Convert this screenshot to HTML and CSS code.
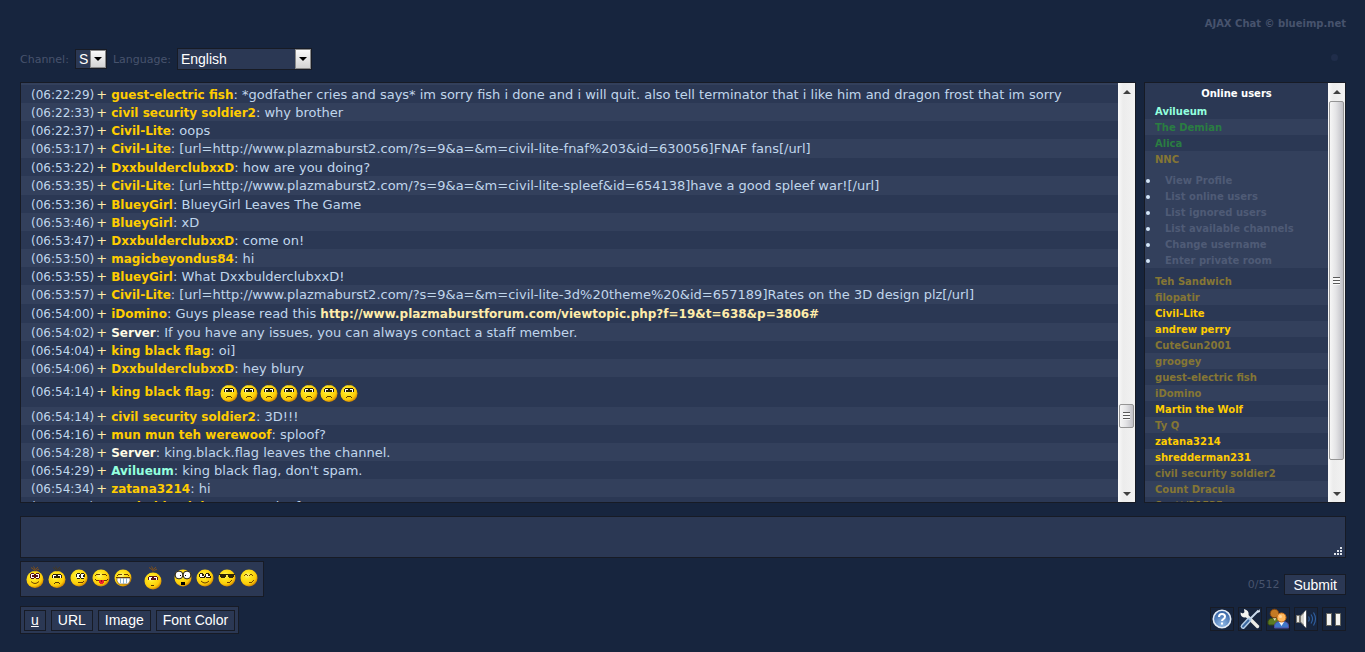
FILE: index.html
```html
<!DOCTYPE html>
<html lang="en">
  <head>
    <meta charset="UTF-8" />
    <title>AJAX Chat</title>
    <link rel="stylesheet" href="styles.css">
  </head>
  <body>
    <!-- shared emoticon shapes -->
    <svg class="defs" aria-hidden="true">
      <defs>
        <radialGradient id="ballFill" cx="0.4" cy="0.35" r="0.68">
          <stop offset="0" stop-color="#fff48a" />
          <stop offset="0.3" stop-color="#ffe61e" />
          <stop offset="0.75" stop-color="#fccb08" />
          <stop offset="1" stop-color="#c97a00" />
        </radialGradient>
        <radialGradient id="helpFill" cx="0.5" cy="0.8" r="0.8">
          <stop offset="0" stop-color="#8fb8e6" />
          <stop offset="1" stop-color="#2c5a9c" />
        </radialGradient>
        <symbol id="ball" viewBox="0 0 18 18">
          <circle cx="9" cy="9" r="8.500" fill="url(#ballFill)" />
        </symbol>
        <symbol id="hair" viewBox="0 0 18 6">
          <path d="M9 5.5V3M8.500 4L5 1.500M9.500 3.500L12 1M9 3L7.500 0.500M10 4.500L13 3" fill="none" stroke-width="0.9" />
        </symbol>
        <symbol id="smile" viewBox="0 0 18 26">
          <use href="#ball" y="5.500" width="18" height="18" />
          <use href="#hair" y="1" width="18" height="6" stroke="#8a5212" />
          <path d="M5 9h3v5h-3zM10 9h3v5h-3z" fill="#fff" />
          <path d="M5 8h3v1h-3zM10 8h3v1h-3zM4 9h1v4h-1zM8 9h2v4h-2zM13 9h1v4h-1zM5 13h3v1h-3zM10 13h3v1h-3zM6 10h2v2h-2zM10 10h2v2h-2z" fill="#5a1418" />
          <path d="M5 16.500q4 4 8 0" fill="none" stroke="#6b3d00" />
        </symbol>
        <symbol id="sad" viewBox="0 0 18 26">
          <use href="#ball" y="5.500" width="18" height="18" />
          <use href="#hair" y="1" width="18" height="6" stroke="#4a3a1c" />
          <path d="M5 10h3v3h-3zM10 10h3v3h-3z" fill="#fff" />
          <path d="M5 9h8v1h-8zM4 10h1v3h-1zM8 10h2v3h-2zM13 10h1v3h-1zM6 11h2v2h-2zM10 11h2v2h-2z" fill="#2a2008" />
          <path d="M7 17h4v1h-4zM6 18h1v1h-1zM11 18h1v1h-1z" fill="#5a3a00" />
        </symbol>
        <symbol id="look" viewBox="0 0 18 26">
          <use href="#ball" y="4" width="18" height="18" />
          <path d="M7 9h3v4h-3zM11 9h3v4h-3z" fill="#fff" />
          <path d="M7 8h3v1h-3zM11 8h3v1h-3zM6 9h1v3h-1zM10 9h1v4h-1zM14 9h1v3h-1zM9 10h1v2h-1zM13 10h1v2h-1zM7 13h3v1h-3zM11 13h3v1h-3z" fill="#2a2008" />
          <path d="M8 17h5v1h-5zM13 16h1v1h-1z" fill="#6b3d00" />
        </symbol>
        <symbol id="tongue" viewBox="0 0 18 26">
          <use href="#ball" y="4" width="18" height="18" />
          <path d="M4 9h4v1h-4zM3 10h1v1h-1zM10 9h4v1h-4zM14 10h1v1h-1zM3 14h1v1h-1zM4 15h11v1h-11zM15 14h1v1h-1z" fill="#6b3d00" />
          <path d="M7 15h5v3h-1v1h-3v-1h-1z" fill="#f0222c" />
          <path d="M9 15h1v2h-1z" fill="#a01018" />
        </symbol>
        <symbol id="grin" viewBox="0 0 18 26">
          <use href="#ball" y="4" width="18" height="18" />
          <path d="M4 9h4v1h-4zM3 10h1v1h-1zM10 9h4v1h-4zM14 10h1v1h-1zM2 12h14v1h-14z" fill="#6b3d00" />
          <path d="M3 13h13v3l-2 3h-9l-2-3z" fill="#fff" stroke="#6b4a10" stroke-width="0.600" />
          <path d="M6 13h1v5h-1zM9 13h1v6h-1zM12 13h1v5h-1z" fill="#8fb6cc" />
        </symbol>
        <symbol id="shy" viewBox="0 0 18 26">
          <use href="#ball" y="7" width="18" height="18" />
          <use href="#hair" y="1" width="18" height="6" stroke="#8a5212" />
          <path d="M5 11h8v1h-8zM4 12h10v3h-10z" fill="#5a1418" />
          <path d="M5 12h3v1h-1v2h-2zM10 12h3v3h-1v-2h-2z" fill="#fff" />
          <path d="M7 20h3v1h-3z" fill="#5a3a00" />
        </symbol>
        <symbol id="shock" viewBox="0 0 18 26">
          <use href="#ball" y="4" width="18" height="18" />
          <circle cx="5" cy="10" r="3.900" fill="#fff" stroke="#2a2008" />
          <circle cx="13" cy="10" r="3.900" fill="#fff" stroke="#2a2008" />
          <path d="M6 10h1v1h-1zM11 10h1v1h-1zM7 17h4v3h-4z" fill="#000" />
        </symbol>
        <symbol id="dream" viewBox="0 0 18 26">
          <use href="#ball" y="4" width="18" height="18" />
          <path d="M4 9h4v4h-4zM10 9h4v4h-4z" fill="#fff" />
          <path d="M4 8h3v1h-3zM10 8h3v1h-3zM3 9h1v3h-1zM6 9h2v2h-2zM8 11h1v2h-1zM12 9h2v2h-2zM9 9h1v3h-1zM14 11h1v2h-1zM4 12h4v1h-4zM10 12h4v1h-4z" fill="#2a2008" />
          <path d="M5 16q4 4 8 0" fill="none" stroke="#6b3d00" />
        </symbol>
        <symbol id="cool" viewBox="0 0 18 26">
          <use href="#ball" y="4" width="18" height="18" />
          <path d="M1 9h16v1h-1v2h-1v1h-4v-1h-1v-2h-2v2h-1v1h-4v-1h-1v-2h-1z" fill="#2e2406" />
          <path d="M9 17h3v1h-3zM12 16h1v1h-1zM13 15h1v1h-1z" fill="#6b3d00" />
        </symbol>
        <symbol id="wink" viewBox="0 0 18 26">
          <use href="#ball" y="4" width="18" height="18" />
          <path d="M5 9h2v1h-2zM4 10h1v1h-1zM7 10h1v1h-1zM10 9h2v1h-2zM9 10h1v1h-1zM12 10h1v1h-1zM9 17h3v1h-3zM12 16h1v1h-1zM13 15h1v1h-1z" fill="#7a4a00" />
        </symbol>
      </defs>
    </svg>

    <header>
      <a class="copyright" href="#">AJAX Chat © blueimp.net</a>
      <div class="settings">
        <label for="channel">Channel:</label>
        <span class="select channel">
          <select id="channel"><option>S</option></select>
          <span class="drop"></span>
        </span>
        <label for="language">Language:</label>
        <span class="select language">
          <select id="language"><option>English</option></select>
          <span class="drop"></span>
        </span>
        <span class="status"></span>
      </div>
    </header>

    <main>
      <section class="panel chat">
        <div class="messages">
          <p><time>(06:22:29)</time> <i>+</i> <b>guest-electric fish</b>: *godfather cries and says* im sorry fish i done and i will quit. also tell terminator that i like him and dragon frost that im sorry</p>
          <p><time>(06:22:33)</time> <i>+</i> <b>civil security soldier2</b>: why brother</p>
          <p><time>(06:22:37)</time> <i>+</i> <b>Civil-Lite</b>: oops</p>
          <p class="url"><time>(06:53:17)</time> <i>+</i> <b>Civil-Lite</b>: [url=http://www.plazmaburst2.com/?s=9&amp;a=&amp;m=civil-lite-fnaf%203&amp;id=630056]FNAF fans[/url]</p>
          <p><time>(06:53:22)</time> <i>+</i> <b>DxxbulderclubxxD</b>: how are you doing?</p>
          <p class="url"><time>(06:53:35)</time> <i>+</i> <b>Civil-Lite</b>: [url=http://www.plazmaburst2.com/?s=9&amp;a=&amp;m=civil-lite-spleef&amp;id=654138]have a good spleef war![/url]</p>
          <p><time>(06:53:36)</time> <i>+</i> <b>BlueyGirl</b>: BlueyGirl Leaves The Game</p>
          <p><time>(06:53:46)</time> <i>+</i> <b>BlueyGirl</b>: xD</p>
          <p><time>(06:53:47)</time> <i>+</i> <b>DxxbulderclubxxD</b>: come on!</p>
          <p><time>(06:53:50)</time> <i>+</i> <b>magicbeyondus84</b>: hi</p>
          <p><time>(06:53:55)</time> <i>+</i> <b>BlueyGirl</b>: What DxxbulderclubxxD!</p>
          <p class="url"><time>(06:53:57)</time> <i>+</i> <b>Civil-Lite</b>: [url=http://www.plazmaburst2.com/?s=9&amp;a=&amp;m=civil-lite-3d%20theme%20&amp;id=657189]Rates on the 3D design plz[/url]</p>
          <p class="url"><time>(06:54:00)</time> <i>+</i> <b>iDomino</b>: Guys please read this <a href="#">http://www.plazmaburstforum.com/viewtopic.php?f=19&amp;t=638&amp;p=3806#</a></p>
          <p><time>(06:54:02)</time> <i>+</i> <b class="server">Server</b>: If you have any issues, you can always contact a staff member.</p>
          <p><time>(06:54:04)</time> <i>+</i> <b>king black flag</b>: oi]</p>
          <p><time>(06:54:06)</time> <i>+</i> <b>DxxbulderclubxxD</b>: hey blury</p>
          <p class="smileys"><time>(06:54:14)</time> <i>+</i> <b>king black flag</b>: <svg><use href="#sad" /></svg><svg><use href="#sad" /></svg><svg><use href="#sad" /></svg><svg><use href="#sad" /></svg><svg><use href="#sad" /></svg><svg><use href="#sad" /></svg><svg><use href="#sad" /></svg></p>
          <p><time>(06:54:14)</time> <i>+</i> <b>civil security soldier2</b>: 3D!!!</p>
          <p><time>(06:54:16)</time> <i>+</i> <b>mun mun teh werewoof</b>: sploof?</p>
          <p><time>(06:54:28)</time> <i>+</i> <b class="server">Server</b>: king.black.flag leaves the channel.</p>
          <p><time>(06:54:29)</time> <i>+</i> <b class="moderator">Avilueum</b>: king black flag, don't spam.</p>
          <p><time>(06:54:34)</time> <i>+</i> <b>zatana3214</b>: hi</p>
          <p><time>(06:54:38)</time> <i>+</i> <b>DxxbulderclubxxD</b>: omg k of</p>
        </div>
        <div class="scrollbar"><span class="up"></span><span class="thumb"></span><span class="down"></span></div>
      </section>

      <section class="panel online">
        <div class="users">
          <h3>Online users</h3>
          <ul class="user-list">
            <li><a class="moderator" href="#">Avilueum</a></li>
            <li><a class="admin" href="#">The Demian</a></li>
            <li><a class="admin" href="#">Alica</a></li>
            <li>
              <a class="away" href="#">NNC</a>
              <ul class="user-menu">
                <li><a href="#">View Profile</a></li>
                <li><a href="#">List online users</a></li>
                <li><a href="#">List ignored users</a></li>
                <li><a href="#">List available channels</a></li>
                <li><a href="#">Change username</a></li>
                <li><a href="#">Enter private room</a></li>
              </ul>
            </li>
            <li class="after-menu"><a class="away" href="#">Teh Sandwich</a></li>
            <li><a class="away" href="#">filopatir</a></li>
            <li><a href="#">Civil-Lite</a></li>
            <li><a href="#">andrew perry</a></li>
            <li><a class="away" href="#">CuteGun2001</a></li>
            <li><a class="away" href="#">groogey</a></li>
            <li><a class="away" href="#">guest-electric fish</a></li>
            <li><a class="away" href="#">iDomino</a></li>
            <li><a href="#">Martin the Wolf</a></li>
            <li><a class="away" href="#">Ty Q</a></li>
            <li><a href="#">zatana3214</a></li>
            <li><a href="#">shredderman231</a></li>
            <li><a class="away" href="#">civil security soldier2</a></li>
            <li><a class="away" href="#">Count Dracula</a></li>
            <li><a class="away" href="#">Scott/31535</a></li>
          </ul>
        </div>
        <div class="scrollbar"><span class="up"></span><span class="thumb"></span><span class="down"></span></div>
      </section>
    </main>

    <form>
      <div class="input">
        <textarea id="message" aria-label="Message"></textarea>
        <svg class="grip" viewBox="0 0 8 8"><path d="M6 0h2v2h-2zM3 3h2v2h-2zM6 3h2v2h-2zM0 6h2v2h-2zM3 6h2v2h-2zM6 6h2v2h-2z" fill="#dfe3ea" /></svg>
      </div>

      <div class="row">
        <div class="panel emoticons">
          <button type="button" title=":)"><svg><use href="#smile" /></svg></button>
          <button type="button" title=":("><svg><use href="#sad" /></svg></button>
          <button type="button" title=";)"><svg><use href="#look" /></svg></button>
          <button type="button" title=":P"><svg><use href="#tongue" /></svg></button>
          <button type="button" title=":D"><svg><use href="#grin" /></svg></button>
          <button type="button" title=":|" class="wide"><svg><use href="#shy" /></svg></button>
          <button type="button" title=":O"><svg><use href="#shock" /></svg></button>
          <button type="button" title=":?"><svg><use href="#dream" /></svg></button>
          <button type="button" title="8)"><svg><use href="#cool" /></svg></button>
          <button type="button" title="^^"><svg><use href="#wink" /></svg></button>
        </div>
        <div class="send">
          <span>0/512</span>
          <button class="button">Submit</button>
        </div>
      </div>

      <div class="row tools">
        <div class="panel bbcode">
          <button type="button" class="button underline">u</button>
          <button type="button" class="button">URL</button>
          <button type="button" class="button">Image</button>
          <button type="button" class="button">Font Color</button>
        </div>
        <div class="options">
          <button type="button" title="Help">
            <svg viewBox="0 0 22 22">
              <circle cx="11" cy="11" r="8.700" fill="url(#helpFill)" stroke="#e4ecf6" stroke-width="1.600" />
              <path d="M8 9q0-3 3-3t3 2.600q0 1.600-1.700 2.500q-1.300 0.700-1.300 2" fill="none" stroke="#fff" stroke-width="2" />
              <path d="M10 14.500h2v2h-2z" fill="#fff" />
            </svg>
          </button>
          <button type="button" title="Settings">
            <svg viewBox="0 0 22 22">
              <path d="M6 6L18.500 18.500" stroke="#ecece8" stroke-width="3.400" stroke-linecap="round" />
              <path d="M1.500 4.500q0 5 4.500 5l1.500-0.500l2-2q1-4.500-4.500-6l0.500 3.500l-1.500 1z" fill="#f4f4f0" />
              <path d="M19.500 2.500L10 12" stroke="#c9daec" stroke-width="2" />
              <path d="M20.500 1l0.500 3l-3 1z" fill="#dfe9f4" />
              <path d="M10 12L4 18.500" stroke="#b4cde6" stroke-width="4.800" stroke-linecap="round" />
              <path d="M9.500 12.500L4 18.500" stroke="#3b68a0" stroke-width="2" stroke-linecap="round" />
            </svg>
          </button>
          <button type="button" title="Users">
            <svg viewBox="0 0 22 22">
              <path d="M1 16v-3q1-3 5-3h4q3 1 3 3v4h-11z" fill="#5c7a24" stroke="#35490f" />
              <path d="M6 10h3l-1 3z" fill="#e9e3c0" />
              <circle cx="7.500" cy="5.500" r="4.300" fill="#c47a24" stroke="#7c4410" />
              <path d="M7.500 20v-3q1-3 4-3.500h6q4 1 4 4v2.500z" fill="#3f78c8" stroke="#514aa0" />
              <path d="M12 14h5l-2.500 4z" fill="#f4f6fa" />
              <circle cx="14.500" cy="9.500" r="4.500" fill="#ffb75c" stroke="#c9701a" />
              <circle cx="13.500" cy="8.500" r="1.500" fill="#ffd79c" />
            </svg>
          </button>
          <button type="button" title="Sound">
            <svg viewBox="0 0 22 22">
              <path d="M1.500 7.500h3v7h-3z" fill="#e8e8e4" stroke="#77756e" />
              <path d="M5.500 8l5.500-5.500v17l-5.500-5.500z" fill="#d6d5cf" stroke="#77756e" />
              <path d="M9 4.500l2-2v17l-2-2z" fill="#fff" />
              <path d="M13.500 8.500q1.500 2.500 0 5M16 6.500q3 4.500 0 9M18.500 4.500q4 6.500 0 13" fill="none" stroke="#2f5f9f" stroke-width="1.200" />
            </svg>
          </button>
          <button type="button" title="Pause">
            <svg viewBox="0 0 22 22">
              <path d="M3.500 5.500h5v12h-5zM12.500 5.500h5v12h-5z" fill="#f4f4f2" stroke="#66665f" />
            </svg>
          </button>
        </div>
      </div>
    </form>
  </body>
</html>
```
FILE: styles.css
```css
* {
  box-sizing: border-box;
}

body {
  margin: 0;
  padding: 16px 19px 18px 20px;
  height: 100vh;
  display: flex;
  flex-direction: column;
  background-color: #17253e;
  color: #c0d6ec;
  font-family: Verdana, "DejaVu Sans", sans-serif;
  font-size: 13px;
  overflow: hidden;
}

a {
  text-decoration: none;
}

.defs {
  position: absolute;
  width: 0;
  height: 0;
}

.panel {
  background-color: #2b3854;
  border: 1px solid #171b25;
}

/* header */
header {
  display: flex;
  flex-direction: column;
}

.copyright {
  align-self: flex-end;
  color: #47536d;
  font-size: 10px;
  font-weight: bold;
  line-height: 16px;
}

.settings {
  display: flex;
  align-items: center;
  gap: 6px;
  height: 22px;
  margin: 16px 0 12px;
  color: #47536d;
  font-size: 11px;
}

.select {
  position: relative;
  display: flex;
}

.select select {
  appearance: none;
  width: 100%;
  height: 100%;
  padding: 0 3px;
  background-color: #2b3854;
  border: 1px solid #171b25;
  border-radius: 0;
  color: #fff;
  font-family: "Liberation Sans", Arial, sans-serif;
  font-size: 14px;
}

.channel {
  width: 32px;
  height: 20px;
}

.language {
  width: 135px;
  height: 22px;
}

.drop {
  position: absolute;
  top: 1px;
  right: 1px;
  bottom: 1px;
  width: 16px;
  display: flex;
  align-items: center;
  justify-content: center;
  background: linear-gradient(#fafafa, #d4d4d4);
  border: 1px solid #8a8a8a;
  pointer-events: none;
}

.drop::after {
  content: "";
  border: 4px solid transparent;
  border-top-color: #000;
  border-bottom: 0;
}

.status {
  width: 7px;
  height: 7px;
  margin: 0 8px 4px auto;
  border-radius: 50%;
  background-color: #202d4a;
}

/* chat and user list */
main {
  flex: 1;
  min-height: 0;
  display: flex;
  gap: 8px;
}

.chat,
.online {
  display: flex;
  overflow: hidden;
}

.chat {
  flex: 1;
  min-width: 0;
}

.online {
  width: 202px;
}

.messages,
.users {
  flex: 1;
  min-width: 0;
  overflow: hidden;
}

.messages {
  border-top: 2px solid #33405c;
}

.messages p {
  margin: 0;
  padding: 1px 0 0 10px;
  line-height: 17px;
  white-space: nowrap;
}

.messages p > * {
  line-height: 1;
}

.messages .url {
  line-height: 18px;
}

.messages p:nth-child(even) {
  background-color: #33405c;
}

.messages time {
  display: inline-block;
  width: 61px;
  font-size: 12px;
}

.messages i {
  color: #ffecaa;
  font-style: normal;
}

.messages b {
  color: #ffcc00;
  font-size: 12px;
}

.messages a {
  color: #ffecaa;
  font-size: 12px;
  font-weight: bold;
}

.messages .server {
  color: #fffbe6;
}

.messages .moderator,
.users .moderator {
  color: #93ffde;
}

.messages .smileys {
  height: 30px;
  line-height: 28px;
}

.smileys svg {
  width: 18px;
  height: 26px;
  margin: 0 1px 2px;
  vertical-align: middle;
}

.users {
  font-size: 10px;
  font-weight: bold;
  line-height: 15px;
}

.users h3 {
  margin: 0;
  padding: 3px 0 2px;
  color: #fff;
  font-size: 10px;
  text-align: center;
}

.user-list,
.user-menu {
  margin: 0;
  padding: 0;
}

.user-list {
  list-style: none;
}

.user-list > li {
  padding-left: 10px;
}

.user-list > li:nth-child(even) {
  background-color: #33405c;
}

.user-list a {
  display: block;
  padding-top: 1px;
  color: #ffcc00;
}

.user-list .admin {
  color: #2a7d42;
}

.user-list .away {
  color: #857634;
}

.user-list .user-menu {
  padding-top: 5px;
  list-style: none;
}

.user-menu li {
  position: relative;
  padding-left: 10px;
}

.user-menu li::before {
  content: "";
  position: absolute;
  top: 7px;
  left: -9px;
  width: 4px;
  height: 4px;
  border-radius: 50%;
  background-color: #d4e6f8;
}

.user-list .user-menu a {
  color: #4f5b76;
}

.user-list .after-menu {
  padding-top: 5px;
}

/* scrollbars */
.scrollbar {
  position: relative;
  width: 17px;
  background: linear-gradient(to right, #fafafa, #ececec 30%, #f2f2f2);
}

.scrollbar .up,
.scrollbar .down {
  position: absolute;
  left: 5px;
  border: 4px solid transparent;
}

.scrollbar .up {
  top: 7px;
  border-top: 0;
  border-bottom-color: #404040;
}

.scrollbar .down {
  bottom: 6px;
  border-bottom: 0;
  border-top-color: #404040;
}

.thumb {
  position: absolute;
  left: 1px;
  right: 1px;
  display: flex;
  align-items: center;
  justify-content: center;
  background: linear-gradient(to right, #f6f6f6, #e4e4e6 45%, #c0c0c6);
  border: 1px solid #959595;
  border-radius: 2px;
}

.thumb::after {
  content: "";
  width: 7px;
  height: 8px;
  background: repeating-linear-gradient(#5a5a5a 0, #5a5a5a 1px, #f8f8f8 1px, #f8f8f8 3px);
}

.chat .thumb {
  top: 76.5%;
  height: 24px;
}

.online .thumb {
  top: 18px;
  bottom: 10%;
}

/* message form */
.input {
  position: relative;
  display: flex;
  margin-top: 13px;
}

.input textarea {
  width: 100%;
  height: 42px;
  padding: 4px;
  background-color: #2b3854;
  border: 1px solid #171b25;
  color: #fff;
  font-family: inherit;
  font-size: 13px;
  resize: none;
}

.grip {
  position: absolute;
  right: 4px;
  bottom: 3px;
  width: 8px;
  height: 8px;
}

.row {
  display: flex;
  justify-content: space-between;
  margin-top: 3px;
}

.emoticons {
  display: flex;
  align-items: center;
  gap: 4px;
  height: 36px;
  padding: 0 5px 2px;
}

.emoticons button {
  display: flex;
  padding: 0;
  background: none;
  border: 0;
  cursor: pointer;
}

.emoticons svg {
  width: 18px;
  height: 26px;
}

.emoticons .wide {
  margin: 0 8px;
}

.send {
  display: flex;
  align-items: center;
  align-self: flex-end;
  gap: 5px;
  margin-bottom: 2px;
  color: #47536d;
  font-size: 11px;
}

.button {
  height: 21px;
  padding: 0 6px;
  background-color: #2b3854;
  border: 1px solid #171b25;
  color: #fff;
  font-family: "Liberation Sans", Arial, sans-serif;
  font-size: 14px;
  cursor: pointer;
}

.send .button {
  padding: 0 8px;
}

.underline {
  text-decoration: underline;
}

.tools {
  margin-top: 9px;
}

.bbcode {
  display: flex;
  align-items: center;
  gap: 5px;
  height: 28px;
  padding: 0 3px;
}

.options {
  display: flex;
  gap: 4px;
  padding-top: 1px;
}

.options button {
  display: flex;
  width: 24px;
  height: 24px;
  padding: 0;
  background: none;
  border: 1px solid #171b25;
  cursor: pointer;
}

.options svg {
  width: 22px;
  height: 22px;
}
```
